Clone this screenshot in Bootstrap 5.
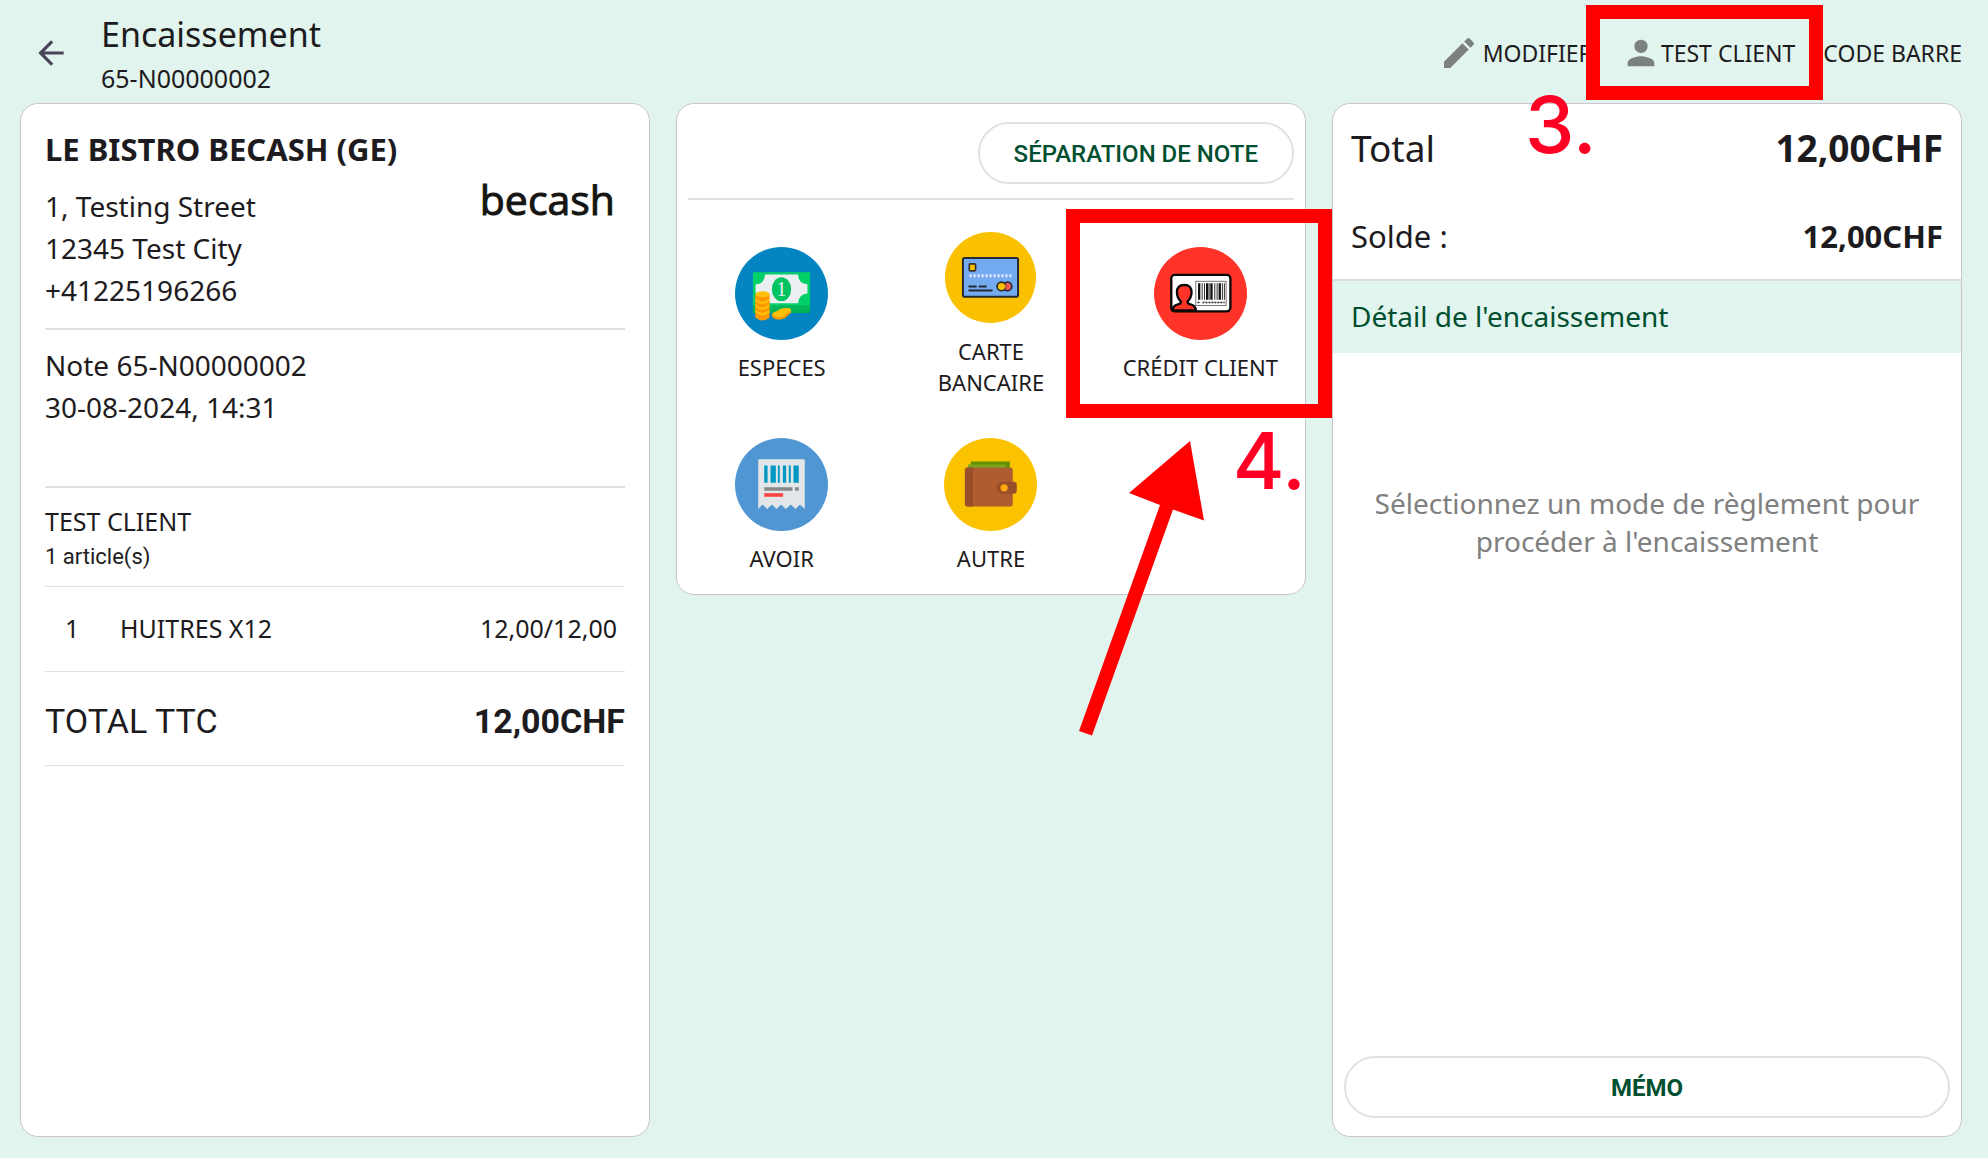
<!DOCTYPE html>
<html lang="fr">
<head>
<meta charset="utf-8">
<meta name="viewport" content="width=device-width, initial-scale=1">
<title>Encaissement</title>
<link href="https://cdn.jsdelivr.net/npm/bootstrap@5.3.0/dist/css/bootstrap.min.css" rel="stylesheet">
<style>
  :root { --ink: #1d1b20; --mint: #e1f4ee; --green: #004f30; --rule: #e2e2e2; --red: #ff0000; }
  body { background: var(--mint); color: var(--ink); font-family: "Noto Sans", sans-serif; }
  .screen { padding: 0 26px 21px 20px; }
  .topbar { padding: 6px 0 3px 12px; }
  .back-btn { width: 38px; height: 38px; color: #4a4458; }
  .screen-title { font-size: 34px; line-height: 44px; }
  .screen-sub { font-size: 25px; line-height: 44px; }
  .heading-text { margin-left: 31px; padding-top: 6px; }
  .actions { gap: 28px; }
  .action { font-size: 23px; line-height: 40px; color: var(--ink); }
  .action svg { width: 40px; height: 40px; fill: #7b827e; }
  .panels { display: grid; grid-template-columns: repeat(3, minmax(0, 1fr)); gap: 26px; }
  .panel { border: 1px solid #cac4d0; border-radius: 18px; background: #fff; }
  .receipt { padding: 22px 24px; }
  .shop { font-size: 31px; line-height: 46px; }
  .addr { font-size: 28px; line-height: 42px; }
  .brand { font-family: "Open Sans", sans-serif; font-size: 41px; line-height: 28px; color: #151513; -webkit-text-stroke: 1px #151513; margin-right: 10px; }
  .block { border-bottom: 2px solid var(--rule); }
  .venue { padding: 13px 0 17px; }
  .ticket { padding: 14px 0 58px; }
  .client { padding: 16px 0 10px; }
  .t25 { font-size: 25px; line-height: 34px; }
  .count { font-family: Roboto, sans-serif; font-size: 22px; line-height: 38px; }
  .item { padding: 24px 8px 26px 20px; }
  .qty { width: 55px; }
  .ttc { font-family: Roboto, sans-serif; font-size: 34px; line-height: 50px; padding: 24px 0 19px; }
  .pill { height: 62px; padding-top: 7px; border: 2px solid var(--rule); border-radius: 31px; color: var(--green); font-family: Roboto, sans-serif; font-size: 24px; }
  .tools { margin: 0 11px; padding: 18px 0 14px; }
  .split-btn { padding-left: 34px; padding-right: 34px; }
  .tiles { display: grid; grid-template-columns: repeat(3, 1fr); row-gap: 2px; padding: 11px 0 2px; }
  .tile { padding: 20px 0 18px; font-size: 22px; line-height: 31px; color: var(--ink); }
  .tile svg.disc { width: 93px; height: 93px; margin-bottom: 12px; }
  .frame { position: absolute; border: 14px solid var(--red); pointer-events: none; }
  .frame-client { inset: -28px -28px -27px -35px; }
  .frame-credit { inset: -2px -27px -2px -30px; }
  .step { position: absolute; font-family: Inter, sans-serif; font-size: 79px; font-weight: 500; line-height: 80px; color: #ff0024; pointer-events: none; }
  .step-3 { left: -96px; top: 51px; }
  .step-4 { right: -1px; top: 209px; }
  .pointer { position: absolute; left: -17px; top: 230px; width: 126px; height: 295px; pointer-events: none; }
  .pad { padding-left: 18px; padding-right: 18px; }
  .total { font-size: 37px; line-height: 50px; padding-top: 19px; }
  .solde { font-size: 31px; line-height: 42px; padding-top: 42px; padding-bottom: 22px; }
  .detail { font-size: 28px; line-height: 40px; padding-top: 15px; padding-bottom: 17px; background: var(--mint); border-top: 2px solid #dadfdd; color: var(--green); }
  .empty { font-size: 28px; line-height: 38px; color: #808080; padding-top: 131px; }
  .memo { margin: auto 11px 18px; }
</style>
</head>
<body>
<div class="screen min-vh-100 d-flex flex-column">
  <header class="topbar d-flex align-items-center justify-content-between">
    <div class="d-flex align-items-center">
      <button class="back-btn btn p-0 border-0 d-flex" type="button" aria-label="Retour">
        <svg width="38" height="38" viewBox="0 0 24 24" fill="currentColor"><path d="M20 11H7.83l5.59-5.59L12 4l-8 8 8 8 1.41-1.41L7.83 13H20z"/></svg>
      </button>
      <div class="heading-text">
        <h1 class="screen-title fw-normal m-0">Encaissement</h1>
        <div class="screen-sub">65-N00000002</div>
      </div>
    </div>
    <nav class="actions d-flex align-items-center">
      <button class="action btn p-0 border-0 d-flex gap-1" type="button"><svg viewBox="0 0 24 24"><path d="M3 17.25V21h3.75L17.81 9.94l-3.75-3.75zM20.71 7.04a1 1 0 0 0 0-1.41l-2.34-2.34a1 1 0 0 0-1.41 0l-1.83 1.83 3.75 3.75z"/></svg>MODIFIER</button>
      <button class="action btn p-0 border-0 d-flex position-relative" type="button"><svg viewBox="0 0 24 24"><path d="M12 12a4 4 0 1 0 0-8 4 4 0 0 0 0 8zm0 2c-2.670 0-8 1.340-8 4v2h16v-2c0-2.660-5.330-4-8-4z"/></svg>TEST CLIENT<span class="frame frame-client"></span><span class="step step-3">3.</span></button>
      <button class="action btn p-0 border-0" type="button">CODE BARRE</button>
    </nav>
  </header>

  <main class="panels flex-grow-1">
    <section class="panel receipt">
      <h2 class="shop fw-bold m-0">LE BISTRO BECASH (GE)</h2>
      <div class="block venue d-flex justify-content-between">
        <address class="addr m-0">1, Testing Street<br>12345 Test City<br>+41225196266</address>
        <div class="brand">becash</div>
      </div>
      <div class="block addr ticket">Note 65-N00000002<br>30-08-2024, 14:31</div>
      <div class="border-bottom client">
        <div class="t25">TEST CLIENT</div>
        <div class="count">1 article(s)</div>
      </div>
      <div class="item t25 d-flex border-bottom"><span class="qty">1</span><span class="flex-grow-1">HUITRES X12</span><span>12,00/12,00</span></div>
      <div class="ttc d-flex justify-content-between border-bottom"><span>TOTAL TTC</span><strong>12,00CHF</strong></div>
    </section>

    <section class="panel align-self-start">
      <div class="tools block d-flex justify-content-end">
        <button class="pill split-btn btn fw-medium" type="button">SÉPARATION DE NOTE</button>
      </div>
      <div class="tiles">
        <button class="tile btn border-0 d-flex flex-column align-items-center justify-content-center" type="button">
          <svg class="disc" viewBox="42 48 280 280"><circle cx="182" cy="188" r="140" fill="#0484c0"/>
            <path fill="#00b35a" d="M96 215h172v32H96z"/><path fill="#00d068" d="M96 124h172v100H96z"/><path stroke="#00c060" stroke-width="3" d="M96 233h172"/>
            <path fill="#eceff1" d="M132 131h100q1 28 28 29v28q-26 2-28 29H132q-1-27-28-29v-28q27-1 28-29z"/>
            <ellipse cx="182" cy="175" rx="29" ry="36" fill="#00c462"/><text x="182" y="196" text-anchor="middle" font-family="Liberation Serif, serif" font-size="62" fill="#eceff1">1</text>
            <g fill="#ff9800"><path d="M103 190h43v70q-21 18-43 0z"/><path d="M153 250v8q14 16 40 4l18-17v-6z"/></g>
            <g fill="#ffc107"><ellipse cx="125" cy="190" rx="21" ry="9"/><path d="M103 203q21 20 43 0v8q-21 17-43 0zM103 220q21 20 43 0v8q-21 17-43 0zM103 237q21 20 43 0v8q-21 17-43 0z"/><ellipse cx="174" cy="250" rx="20" ry="9"/><ellipse cx="189" cy="241" rx="22" ry="9" transform="rotate(-10 189 241)"/></g></svg>
          <span>ESPECES</span></button>
        <button class="tile btn border-0 d-flex flex-column align-items-center justify-content-center" type="button">
          <svg class="disc" viewBox="42 32 280 280"><circle cx="182" cy="172" r="137" fill="#fac100"/>
            <rect x="99" y="113" width="166" height="117" rx="5" fill="#74abf0" stroke="#242a31" stroke-width="6"/>
            <rect x="118" y="131" width="19" height="21" rx="3" fill="#fac100" stroke="#3a342b" stroke-width="5"/>
            <path stroke="#e8f2ff" stroke-width="9" stroke-dasharray="6 6" d="M119 167h128"/>
            <path stroke="#242a31" stroke-width="6" stroke-linecap="round" d="M118 199h20M149 199h19M118 211h68"/>
            <circle cx="233" cy="199" r="13" fill="#fb5858" stroke="#242a31" stroke-width="5"/><circle cx="215" cy="199" r="13" fill="#fac100" stroke="#242a31" stroke-width="5"/><path d="M224 190q10 9 0 18z" fill="#fb8a30"/></svg>
          <span>CARTE<br>BANCAIRE</span></button>
        <button class="tile btn border-0 d-flex flex-column align-items-center justify-content-center position-relative" type="button">
          <svg class="disc" viewBox="43 50 280 280"><circle cx="183" cy="190" r="140" fill="#ff3328"/>
            <rect x="95" y="134" width="178" height="110" rx="11" fill="#fff" stroke="#080808" stroke-width="7"/>
            <path fill="#ff3328" stroke="#080808" stroke-width="7" d="M99 241q1-15 16-18 9-2 9-9-12-12-12-27 0-23 22-23t22 23q0 15-12 27 0 7 9 9 15 3 16 18z"/>
            <rect x="169" y="153" width="91" height="73" fill="#fff" stroke="#333" stroke-width="2"/>
            <path stroke="#111" stroke-width="7" d="M179 159v50M203 159v50M216 159v50M241 159v50"/><path stroke="#333" stroke-width="3" d="M188 159v50M195 159v50M209 159v50M226 159v50M233 159v50M249 159v50M255 159v50"/>
            <path stroke="#222" stroke-width="5" stroke-dasharray="6 3" d="M174 217h7M189 217h67"/></svg>
          <span>CRÉDIT CLIENT</span>
          <span class="frame frame-credit"></span><span class="step step-4">4.</span>
          <svg class="pointer" viewBox="1079 441 126 295"><path fill="#ff0000" d="M1190 441l14 79.500-31-11-81 226-13-4.500 81-226-31-12z"/></svg>
        </button>
        <button class="tile btn border-0 d-flex flex-column align-items-center justify-content-center" type="button">
          <svg class="disc" viewBox="42 40 280 280"><circle cx="182" cy="180" r="140" fill="#5096d2"/>
            <path fill="#e2e6e8" d="M112 107q0-3 3-3h134q3 0 3 3v147l-14-14-14 14-14-14-15 14-14-14-14 14-14-14-14 14-14-14-13 14z"/>
            <path fill="#0098c3" d="M130 123h10v52h-10zM149 123h16v52h-16zM171 123h6v52h-6zM186 123h10v52h-10zM204 123h6v52h-6zM218 123h16v52h-16z"/>
            <path fill="#888" d="M130 188h85v11h-85zM223 188h11v11h-11z"/><path fill="#fb4646" d="M130 206h57v11h-57z"/></svg>
          <span>AVOIR</span></button>
        <button class="tile btn border-0 d-flex flex-column align-items-center justify-content-center" type="button">
          <svg class="disc" viewBox="42 40 280 280"><circle cx="182" cy="180" r="140" fill="#fbc200"/>
            <path fill="#5f9000" d="M123 111h117v30H123z"/><path fill="#78a51b" d="M114 120h114v20H114z"/>
            <rect x="105" y="129" width="144" height="117" rx="8" fill="#ae5c30"/><path fill="#994e2a" d="M129 129h-16q-8 0-8 8v101q0 8 8 8h16z"/>
            <path fill="#994e2a" d="M218 172h34q9 0 9 9v18q0 9-9 9h-34q-17-2-17-18t17-18z"/><circle cx="223" cy="190" r="11" fill="#ffa90a"/></svg>
          <span>AUTRE</span></button>
      </div>
    </section>

    <section class="panel d-flex flex-column">
      <div class="total pad d-flex justify-content-between"><span>Total</span><strong>12,00CHF</strong></div>
      <div class="solde pad d-flex justify-content-between"><span>Solde :</span><strong>12,00CHF</strong></div>
      <h2 class="detail pad m-0 fw-normal">Détail de l'encaissement</h2>
      <p class="empty text-center pad">Sélectionnez un mode de règlement pour procéder à l'encaissement</p>
      <button class="pill memo btn fw-bold" type="button">MÉMO</button>
    </section>
  </main>
</div>
<script src="https://cdn.jsdelivr.net/npm/bootstrap@5.3.0/dist/js/bootstrap.bundle.min.js"></script>
</body>
</html>
